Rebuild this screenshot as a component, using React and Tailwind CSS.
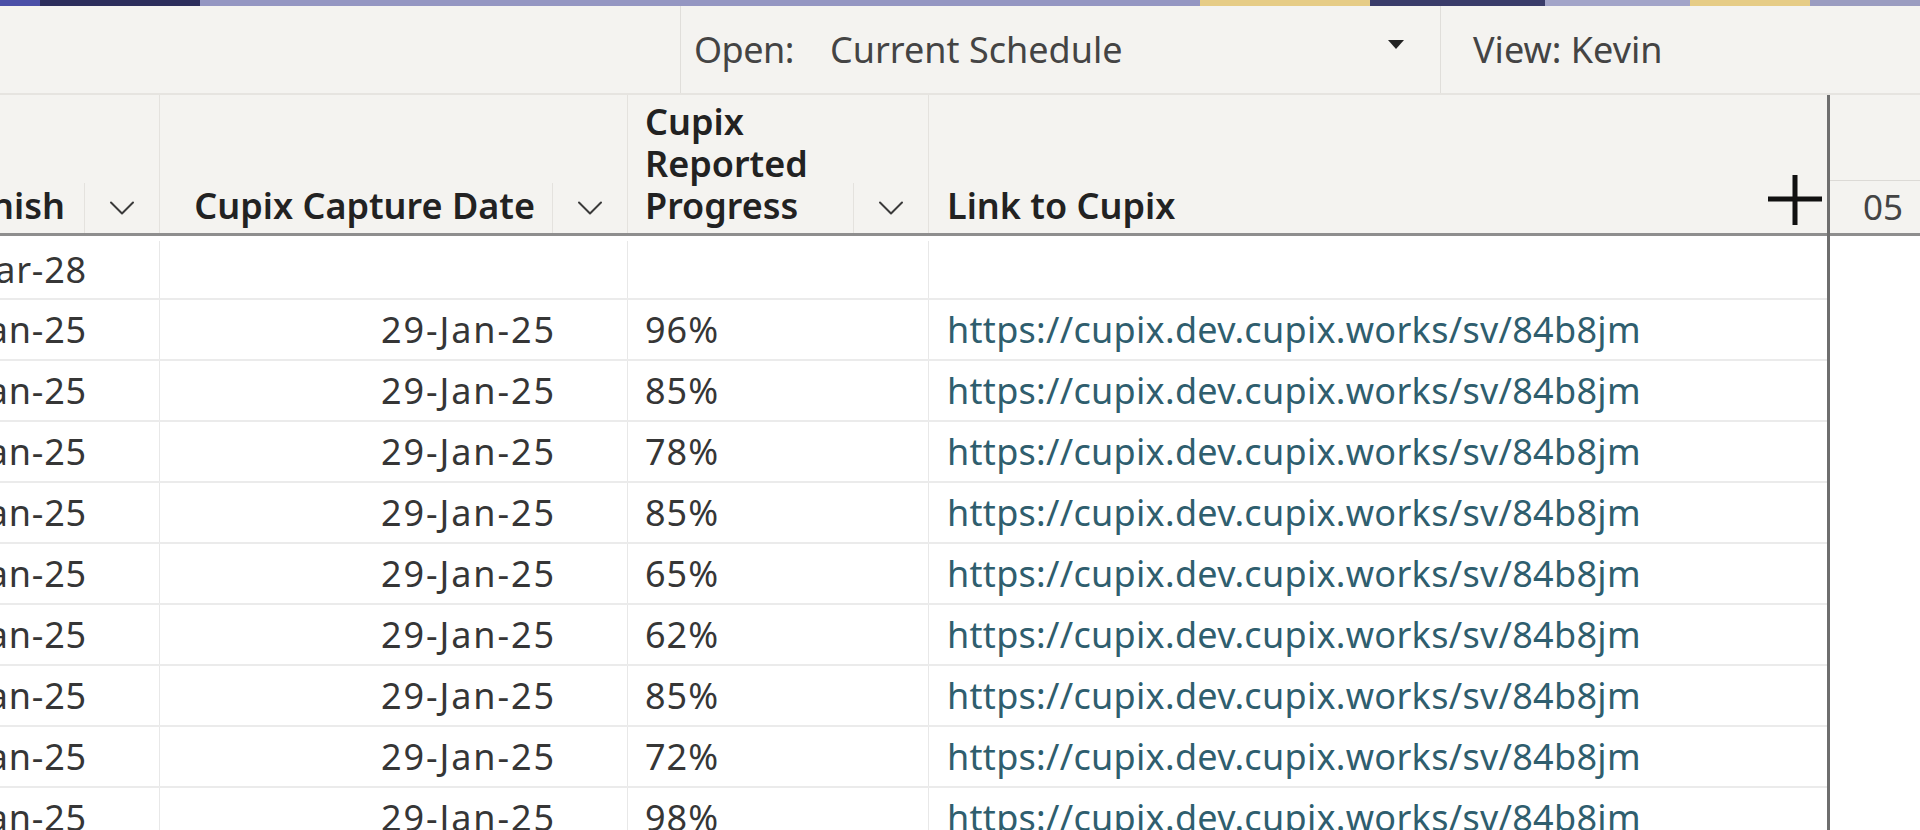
import { ChevronDown } from "lucide-react"

const rows = [
  { finish: "31-Mar-28", capture: "", progress: "", link: "" },
  { finish: "29-Jan-25", capture: "29-Jan-25", progress: "96%", link: "https://cupix.dev.cupix.works/sv/84b8jm" },
  { finish: "29-Jan-25", capture: "29-Jan-25", progress: "85%", link: "https://cupix.dev.cupix.works/sv/84b8jm" },
  { finish: "29-Jan-25", capture: "29-Jan-25", progress: "78%", link: "https://cupix.dev.cupix.works/sv/84b8jm" },
  { finish: "29-Jan-25", capture: "29-Jan-25", progress: "85%", link: "https://cupix.dev.cupix.works/sv/84b8jm" },
  { finish: "29-Jan-25", capture: "29-Jan-25", progress: "65%", link: "https://cupix.dev.cupix.works/sv/84b8jm" },
  { finish: "29-Jan-25", capture: "29-Jan-25", progress: "62%", link: "https://cupix.dev.cupix.works/sv/84b8jm" },
  { finish: "29-Jan-25", capture: "29-Jan-25", progress: "85%", link: "https://cupix.dev.cupix.works/sv/84b8jm" },
  { finish: "29-Jan-25", capture: "29-Jan-25", progress: "72%", link: "https://cupix.dev.cupix.works/sv/84b8jm" },
  { finish: "29-Jan-25", capture: "29-Jan-25", progress: "98%", link: "https://cupix.dev.cupix.works/sv/84b8jm" },
]

// 헤더 정렬 버튼 (구분선 + 화살표)
function SortButton() {
  return (
    <div className="flex items-end h-full">
      <div className="w-[1px] h-[50px] bg-[#e4e2de]" />
      <div className="w-[74px] h-[50px] flex items-center justify-center">
        <ChevronDown size={44} strokeWidth={1.1} className="text-[#3a3a3a]" />
      </div>
    </div>
  )
}

export default function App() {
  return (
    <div className="w-[1920px] h-[830px] overflow-hidden bg-white font-['Noto_Sans',sans-serif] text-[#363636]">
      {/* 상단 간트 조각 */}
      <div className="flex h-[6px]">
        <div className="w-[40px] bg-[#4a4fa8]" />
        <div className="w-[160px] bg-[#2c2e5c]" />
        <div className="w-[1000px] bg-[#9496c2]" />
        <div className="w-[170px] bg-[#e6cc86]" />
        <div className="w-[175px] bg-[#3a3c6a]" />
        <div className="w-[145px] bg-[#a2a4c8]" />
        <div className="w-[120px] bg-[#e6cc86]" />
        <div className="flex-1 bg-[#9a9cc0]" />
      </div>

      {/* 툴바 */}
      <div className="flex h-[89px] bg-[#f4f3f0] border-b-2 border-[#e6e4e0] text-[36px] text-[#444]">
        <div className="w-[680px]" />
        <div className="w-[760px] flex items-center border-l border-[#e0deda] pl-[13px] pr-[36px]">
          <span className="tracking-[-0.5px]">Open:</span>
          <span className="ml-[36px]">Current Schedule</span>
          <span className="ml-auto mb-[10px] w-0 h-0 border-l-[8px] border-r-[8px] border-t-[9px] border-l-transparent border-r-transparent border-t-[#222]" />
        </div>
        <div className="flex-1 flex items-center border-l border-[#e0deda] pl-[32px]">
          <span>View: Kevin</span>
        </div>
      </div>

      <div className="flex">
        {/* 표 영역 */}
        <div className="w-[1827px] flex flex-col">
          {/* 헤더 */}
          <div className="flex h-[141px] bg-[#f4f3f0] border-b-[3px] border-[#8e8e8e] text-[36px] leading-[42px] font-semibold text-[#222]">
            <div className="w-[160px] flex overflow-hidden border-r border-[#e4e2de]">
              <div className="flex-1 flex items-end justify-end pb-[6px] pr-[19px] overflow-hidden">
                <span className="whitespace-nowrap">Finish</span>
              </div>
              <SortButton />
            </div>
            <div className="w-[468px] flex border-r border-[#e4e2de]">
              <div className="flex-1 flex items-end justify-end pb-[6px] pr-[17px]">
                <span className="whitespace-nowrap">Cupix Capture Date</span>
              </div>
              <SortButton />
            </div>
            <div className="w-[301px] flex border-r border-[#e4e2de]">
              <div className="flex-1 flex items-end pb-[6px] pl-[17px]">
                <span className="w-[180px]">Cupix Reported Progress</span>
              </div>
              <SortButton />
            </div>
            <div className="flex-1 flex items-end justify-between pb-[6px] pl-[18px] pr-[5px]">
              <span>Link to Cupix</span>
              <svg width="54" height="50" viewBox="0 0 54 50" className="mb-[2px]">
                <path d="M27 0 V50 M0 24 H54" stroke="#111" strokeWidth="5" fill="none" />
              </svg>
            </div>
          </div>

          {/* 행 */}
          {rows.map((row, index) => (
            <div
              key={index}
              className={`flex border-b-2 border-[#ebebeb] text-[36px] ${index === 0 ? "h-[64px] pt-[5px]" : "h-[61px]"}`}
            >
              <div className="w-[160px] flex items-center justify-end pr-[72px] overflow-hidden border-r border-[#e8e8e8]">
                <span className="whitespace-nowrap tracking-[0.8px]">{row.finish}</span>
              </div>
              <div className="w-[468px] flex items-center justify-end pr-[71px] border-r border-[#e8e8e8]">
                <span className="tracking-[1.9px]">{row.capture}</span>
              </div>
              <div className="w-[301px] flex items-center pl-[17px] border-r border-[#e8e8e8]">
                <span className="tracking-[1px]">{row.progress}</span>
              </div>
              <div className="flex-1 flex items-center pl-[18px]">
                <a className="text-[#2f5e6e] whitespace-nowrap tracking-[0.3px]">{row.link}</a>
              </div>
            </div>
          ))}
        </div>

        {/* 간트 타임라인 */}
        <div className="flex-1 flex flex-col border-l-[3px] border-[#6e6e6e]">
          <div className="h-[141px] flex flex-col bg-[#f4f3f0] border-b-[3px] border-[#8e8e8e]">
            <div className="h-[90px] border-b border-[#dcdad6]" />
            <div className="flex-1 flex items-center pl-[33px] text-[35px] text-[#444]">05</div>
          </div>
          <div className="flex-1" />
        </div>
      </div>
    </div>
  )
}
